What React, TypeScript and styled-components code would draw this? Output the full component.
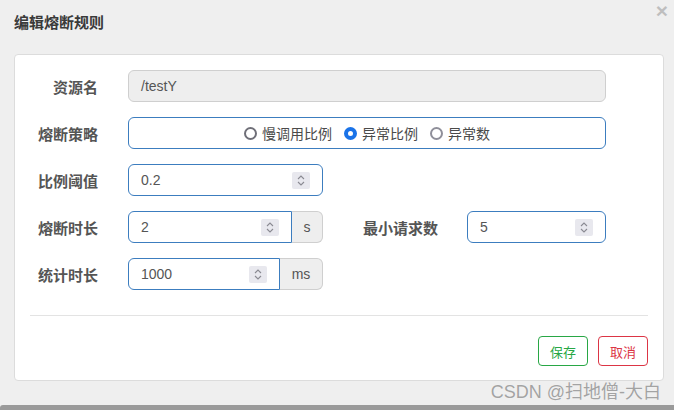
import React from "react";
import styled, { createGlobalStyle } from "styled-components";

const GlobalStyle = createGlobalStyle`
  html, body { margin: 0; padding: 0; }
  body {
    background: #efefef;
    font-family: "Liberation Sans", "Noto Sans CJK SC", Arial, sans-serif;
    -webkit-font-smoothing: antialiased;
  }
`;

const Page = styled.div`
  position: relative;
  width: 674px;
  height: 410px;
  display: flex;
  flex-direction: column;
  background: #efefef;
  overflow: hidden;
`;

const Dialog = styled.div`
  flex: 1;
  display: flex;
  flex-direction: column;
`;

const Header = styled.div`
  height: 54px;
  box-sizing: border-box;
  display: flex;
  justify-content: space-between;
  align-items: flex-start;
  padding: 0 6px 0 14px;
`;

const Title = styled.div`
  margin-top: 14px;
  font-family: "Noto Sans CJK SC", sans-serif;
  font-size: 15px;
  line-height: 16px;
  font-weight: 700;
  color: #3a3a3a;
`;

const Close = styled.button`
  margin-top: 0;
  padding: 0;
  border: 0;
  background: transparent;
  font-family: "Liberation Sans", Arial, sans-serif;
  font-size: 21px;
  font-weight: 700;
  line-height: 21px;
  color: #000;
  opacity: 0.2;
  cursor: pointer;
`;

const Card = styled.div`
  margin-left: 14px;
  width: 650px;
  box-sizing: border-box;
  background: #fff;
  border: 1px solid #dcdcdc;
  border-radius: 4px;
  padding: 15px 15px 14px 15px;
`;

const Form = styled.div`
  display: flex;
  flex-direction: column;
  gap: 15px;
`;

const Row = styled.div`
  display: flex;
  align-items: center;
  height: 32px;
`;

const Label = styled.label<{ $w?: number; $ml?: number }>`
  width: ${(p) => p.$w ?? 68}px;
  margin-left: ${(p) => p.$ml ?? 0}px;
  margin-right: ${(p) => (p.$w ? 29 : 30)}px;
  text-align: right;
  font-family: "Noto Sans CJK SC", sans-serif;
  font-size: 15px;
  font-weight: 700;
  color: #555;
  white-space: nowrap;
  flex-shrink: 0;
`;

const Field = styled.div<{ $w: number; $disabled?: boolean; $joined?: boolean }>`
  width: ${(p) => p.$w}px;
  height: 32px;
  box-sizing: border-box;
  display: flex;
  align-items: center;
  padding: 0 12px 0 12px;
  border: 1px solid ${(p) => (p.$disabled ? "#cfcfcf" : "#3c7dbf")};
  background: ${(p) => (p.$disabled ? "#eeeeee" : "#fff")};
  border-radius: ${(p) => (p.$joined ? "6px 0 0 6px" : "6px")};
  font-size: 14px;
  color: #555;
  flex-shrink: 0;
`;

const Value = styled.span`
  flex: 1;
  font-family: "Liberation Sans", Arial, sans-serif;
`;

const Addon = styled.div<{ $w: number }>`
  width: ${(p) => p.$w}px;
  height: 32px;
  box-sizing: border-box;
  display: flex;
  align-items: center;
  justify-content: center;
  background: #eeeeee;
  border: 1px solid #cfcfcf;
  border-left: 0;
  border-radius: 0 6px 6px 0;
  font-size: 14px;
  color: #555;
  flex-shrink: 0;
`;

const SpinBox = styled.span`
  width: 18px;
  height: 17px;
  background: #e8e8ee;
  border-radius: 2px;
  display: flex;
  align-items: center;
  justify-content: center;
`;

const Spinner = () => (
  <SpinBox>
    <svg width="10" height="13" viewBox="0 0 10 13">
      <path d="M2 5 L5 2 L8 5" fill="none" stroke="#8a8a92" strokeWidth="1.1" />
      <path d="M2 8 L5 11 L8 8" fill="none" stroke="#8a8a92" strokeWidth="1.1" />
    </svg>
  </SpinBox>
);

const RadioGroup = styled.div`
  width: 478px;
  height: 32px;
  box-sizing: border-box;
  border: 1px solid #3c7dbf;
  border-radius: 6px;
  display: flex;
  align-items: center;
  justify-content: center;
  gap: 12px;
`;

const RadioItem = styled.label`
  display: flex;
  align-items: center;
  gap: 5px;
  font-family: "Noto Sans CJK SC", sans-serif;
  font-size: 14px;
  color: #4a4a4a;
  white-space: nowrap;
`;

const RadioDot = styled.span<{ $checked?: boolean; $dark?: boolean }>`
  width: 13px;
  height: 13px;
  box-sizing: border-box;
  border-radius: 50%;
  border: ${(p) =>
    p.$checked ? "4px solid #1a73e8" : `2px solid ${p.$dark ? "#6f6f78" : "#8f8f9a"}`};
  background: #fff;
`;

const Divider = styled.div`
  margin-top: 25px;
  height: 1px;
  background: #e3e3e3;
`;

const Footer = styled.div`
  margin-top: 20px;
  display: flex;
  justify-content: flex-end;
  gap: 10px;
`;

const Button = styled.button<{ $color: string }>`
  width: 50px;
  height: 30px;
  box-sizing: border-box;
  padding: 0;
  border: 1px solid ${(p) => p.$color};
  border-radius: 4px;
  background: #fff;
  color: ${(p) => p.$color};
  font-family: "Noto Sans CJK SC", sans-serif;
  font-size: 13px;
  cursor: pointer;
`;

const BottomStrip = styled.div`
  height: 5px;
  background: #9a9a9a;
  border-top-left-radius: 3px;
`;

const Watermark = styled.div`
  position: absolute;
  right: 13px;
  bottom: 8px;
  font-family: "Liberation Sans", "Noto Sans CJK SC", sans-serif;
  font-size: 18px;
  line-height: 20px;
  color: #a3a3a3;
  text-shadow: 0 0 1px rgba(255, 255, 255, 0.8);
  pointer-events: none;
`;

export default function App() {
  return (
    <Page>
      <GlobalStyle />
      <Dialog>
        <Header>
          <Title>编辑熔断规则</Title>
          <Close aria-label="close">×</Close>
        </Header>
        <Card>
          <Form>
            <Row>
              <Label>资源名</Label>
              <Field $w={478} $disabled>
                <Value>/testY</Value>
              </Field>
            </Row>
            <Row>
              <Label>熔断策略</Label>
              <RadioGroup>
                <RadioItem>
                  <RadioDot $dark />
                  慢调用比例
                </RadioItem>
                <RadioItem>
                  <RadioDot $checked />
                  异常比例
                </RadioItem>
                <RadioItem>
                  <RadioDot />
                  异常数
                </RadioItem>
              </RadioGroup>
            </Row>
            <Row>
              <Label>比例阈值</Label>
              <Field $w={195}>
                <Value>0.2</Value>
                <Spinner />
              </Field>
            </Row>
            <Row>
              <Label>熔断时长</Label>
              <Field $w={164} $joined>
                <Value>2</Value>
                <Spinner />
              </Field>
              <Addon $w={31}>s</Addon>
              <Label $w={76} $ml={39}>最小请求数</Label>
              <Field $w={139}>
                <Value>5</Value>
                <Spinner />
              </Field>
            </Row>
            <Row>
              <Label>统计时长</Label>
              <Field $w={152} $joined>
                <Value>1000</Value>
                <Spinner />
              </Field>
              <Addon $w={43}>ms</Addon>
            </Row>
          </Form>
          <Divider />
          <Footer>
            <Button $color="#28a745">保存</Button>
            <Button $color="#dc3545">取消</Button>
          </Footer>
        </Card>
      </Dialog>
      <BottomStrip />
      <Watermark>CSDN @扫地僧-大白</Watermark>
    </Page>
  );
}
